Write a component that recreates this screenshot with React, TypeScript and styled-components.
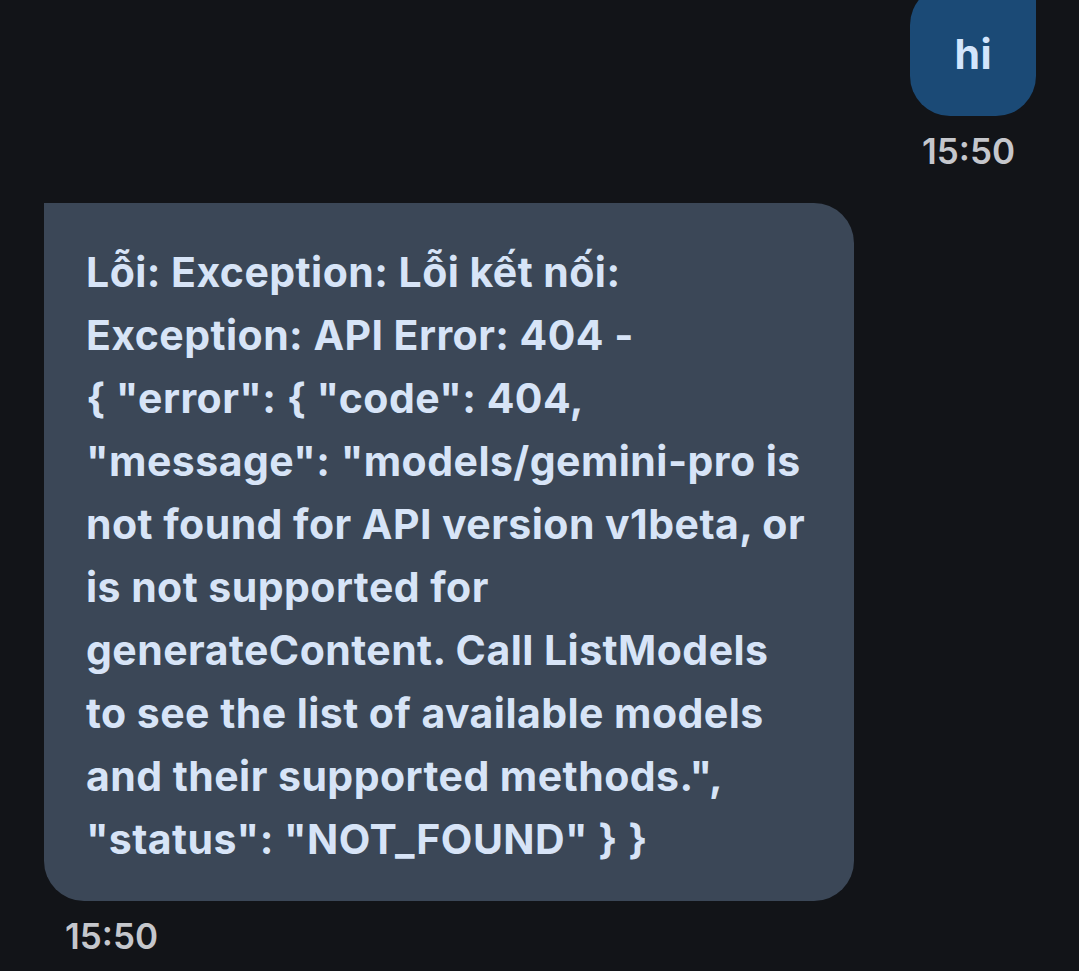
import React from "react";
import styled, { createGlobalStyle } from "styled-components";

const GlobalStyle = createGlobalStyle`
  html, body {
    margin: 0;
    padding: 0;
    background: #121418;
    overflow: hidden;
  }
  body {
    font-family: Inter, "Noto Sans", "Liberation Sans", sans-serif;
  }
`;

const Page = styled.div`
  width: 1079px;
  height: 971px;
  overflow: hidden;
  background: #121418;
`;

const Thread = styled.div`
  display: flex;
  flex-direction: column;
  padding: 0 43px 0 44px;
  margin-top: -15px;
`;

const MessageGroup = styled.div<{ $mine?: boolean }>`
  display: flex;
  flex-direction: column;
  align-items: ${(p) => (p.$mine ? "flex-end" : "flex-start")};
  margin-bottom: 32px;
`;

const Bubble = styled.div<{ $mine?: boolean }>`
  box-sizing: border-box;
  max-width: 810px;
  width: ${(p) => (p.$mine ? "auto" : "810px")};
  padding: ${(p) => (p.$mine ? "38px 44px 30px" : "38px 42px 30px")};
  background: ${(p) => (p.$mine ? "#1b4a76" : "#3b4757")};
  color: ${(p) => (p.$mine ? "#d3e5fc" : "#d7e4f7")};
  border-radius: ${(p) => (p.$mine ? "40px 0 40px 40px" : "0 40px 40px 40px")};
  font-size: 41px;
  line-height: 63px;
  font-weight: 700;
  letter-spacing: 0.45px;
  white-space: nowrap;
`;

const Time = styled.div`
  padding: 0 21px;
  margin-top: 15px;
  font-size: 35px;
  line-height: 40px;
  font-weight: 600;
  color: #c5c7cc;
`;

const lines = [
  "Lỗi: Exception: Lỗi kết nối:",
  "Exception: API Error: 404 -",
  '{ "error": { "code": 404,',
  '"message": "models/gemini-pro is',
  "not found for API version v1beta, or",
  "is not supported for",
  "generateContent. Call ListModels",
  "to see the list of available models",
  'and their supported methods.",',
  '"status": "NOT_FOUND" } }',
];

export default function App() {
  return (
    <Page>
      <GlobalStyle />
      <Thread>
        <MessageGroup $mine>
          <Bubble $mine>hi</Bubble>
          <Time>15:50</Time>
        </MessageGroup>
        <MessageGroup>
          <Bubble>
            {lines.map((l, i) => (
              <React.Fragment key={i}>
                {l}
                {i < lines.length - 1 && <br />}
              </React.Fragment>
            ))}
          </Bubble>
          <Time>15:50</Time>
        </MessageGroup>
      </Thread>
    </Page>
  );
}
